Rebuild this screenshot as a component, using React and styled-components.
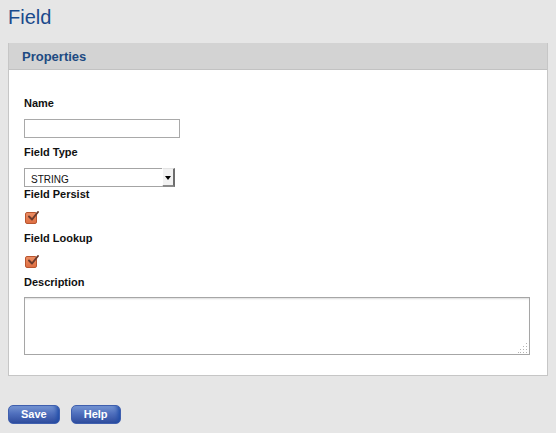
import React from "react";
import styled, { createGlobalStyle } from "styled-components";

const GlobalStyle = createGlobalStyle`
  html, body {
    margin: 0;
    padding: 0;
    background: #e6e6e6;
    font-family: "Liberation Sans", Arial, sans-serif;
  }
`;

const Page = styled.div`
  padding: 6px 8px 0 8px;
`;

const Title = styled.h1`
  margin: 0;
  font-size: 20px;
  line-height: 23px;
  font-weight: normal;
  color: #1a4a8c;
`;

const Panel = styled.section`
  margin-top: 14px;
  width: 540px;
  box-sizing: border-box;
  background: #fff;
  border: 1px solid #c6c6c6;
  border-top: none;
`;

const PanelHeader = styled.div`
  height: 26px;
  background: #d3d3d3;
  border-bottom: 1px solid #c2c2c2;
  padding-left: 13px;
  display: flex;
  align-items: center;
  font-size: 13px;
  font-weight: bold;
  color: #1d4a82;
`;

const PanelBody = styled.div`
  padding: 27px 16px 20px 15px;
  display: flex;
  flex-direction: column;
  align-items: flex-start;
`;

const Label = styled.label`
  display: block;
  font-size: 11px;
  line-height: 13px;
  font-weight: bold;
  color: #111;
  margin-bottom: ${(p) => p.$gap ?? 9}px;
`;

const TextInput = styled.input`
  box-sizing: border-box;
  width: 156px;
  height: 19px;
  margin: 0 0 8px 0;
  border: 1px solid #a9a9a9;
  padding: 1px 3px;
  font: 11px "Liberation Sans", Arial, sans-serif;
  outline: none;
`;

const SelectWrap = styled.div`
  position: relative;
  box-sizing: border-box;
  width: 151px;
  height: 19px;
  margin-bottom: 1px;
  border: 1px solid #a4a4a4;
  border-right: none;
  background: #fff;
`;

const NativeSelect = styled.select`
  appearance: none;
  -webkit-appearance: none;
  box-sizing: border-box;
  width: 100%;
  height: 100%;
  border: none;
  outline: none;
  background: transparent;
  padding: 0 0 0 6px;
  line-height: 15px;
  font: 10px "Liberation Sans", Arial, sans-serif;
  color: #111;
`;

/* dropdown button drawn over the select's right end */
const ArrowButton = styled.span`
  position: absolute;
  top: -1px;
  right: 0;
  bottom: -1px;
  width: 13px;
  box-sizing: border-box;
  background: #f2f2f2;
  border-top: 1px solid #e4e4e4;
  border-left: 1px solid #ffffff;
  border-right: 2px solid #6d6d6d;
  border-bottom: 2px solid #8a8a8a;
  display: flex;
  align-items: center;
  justify-content: center;
  pointer-events: none;

  &::after {
    content: "";
    display: block;
    margin-top: 1px;
    border-left: 3px solid transparent;
    border-right: 3px solid transparent;
    border-top: 4px solid #000;
  }
`;

const CheckBox = styled.span`
  display: block;
  box-sizing: border-box;
  width: 12px;
  height: 12px;
  margin: 2px 0 8px 1px;
  border: 1px solid #b8552f;
  border-radius: 2px;
  background: linear-gradient(#ec8d63, #de6f43);
  position: relative;
`;

const CheckMark = styled.svg`
  position: absolute;
  left: 1px;
  top: -3px;
  width: 12px;
  height: 12px;
  overflow: visible;
`;

const AreaWrap = styled.div`
  position: relative;
  width: 506px;
  height: 58px;
`;

const TextArea = styled.textarea`
  display: block;
  box-sizing: border-box;
  width: 100%;
  height: 100%;
  margin: 0;
  resize: none;
  border: 1px solid #a6a6a6;
  box-shadow: inset 0 2px 2px -1px #dcdcdc;
  font: 11px "Liberation Sans", Arial, sans-serif;
  outline: none;
`;

/* dotted resize grip in the textarea's corner */
const Grip = styled.svg`
  position: absolute;
  right: 2px;
  bottom: 2px;
  width: 10px;
  height: 10px;
  pointer-events: none;
`;

const Actions = styled.div`
  display: flex;
  gap: 11px;
  margin-top: 29px;
`;

const Button = styled.button`
  height: 19px;
  padding: 0 12px;
  border: 1px solid #3f5fae;
  border-radius: 5px;
  background: linear-gradient(to bottom, #7594d2 0%, #4f6fbd 45%, #2f4c9d 100%);
  box-shadow: inset -5px 0 4px -3px #1e4ca8;
  color: #fff;
  font: bold 11px "Liberation Sans", Arial, sans-serif;
  line-height: 17px;
  cursor: pointer;
`;

function Check() {
  return (
    <CheckBox role="checkbox" aria-checked="true">
      <CheckMark viewBox="0 0 12 12">
        <path
          d="M2 6.5 L5 9.5 L11 2"
          fill="none"
          stroke="#6a3a2c"
          strokeWidth="2"
          strokeLinecap="round"
          strokeLinejoin="round"
        />
      </CheckMark>
    </CheckBox>
  );
}

const gripDots = [
  [8, 0], [8, 3], [5, 3], [8, 6], [5, 6], [2, 6], [8, 9], [5, 9], [2, 9], [0, 9],
];

export default function App() {
  return (
    <>
      <GlobalStyle />
      <Page>
        <Title>Field</Title>
        <Panel>
          <PanelHeader>Properties</PanelHeader>
          <PanelBody>
            <Label>Name</Label>
            <TextInput type="text" />
            <Label>Field Type</Label>
            <SelectWrap>
              <NativeSelect defaultValue="STRING">
                <option>STRING</option>
                <option>INTEGER</option>
                <option>DATE</option>
              </NativeSelect>
              <ArrowButton />
            </SelectWrap>
            <Label>Field Persist</Label>
            <Check />
            <Label>Field Lookup</Label>
            <Check />
            <Label $gap={8}>Description</Label>
            <AreaWrap>
              <TextArea />
              <Grip viewBox="0 0 10 10">
                {gripDots.map(([x, y]) => (
                  <rect key={`${x}-${y}`} x={x} y={y} width="1" height="1" fill="#b4b4b4" />
                ))}
              </Grip>
            </AreaWrap>
          </PanelBody>
        </Panel>
        <Actions>
          <Button>Save</Button>
          <Button>Help</Button>
        </Actions>
      </Page>
    </>
  );
}
